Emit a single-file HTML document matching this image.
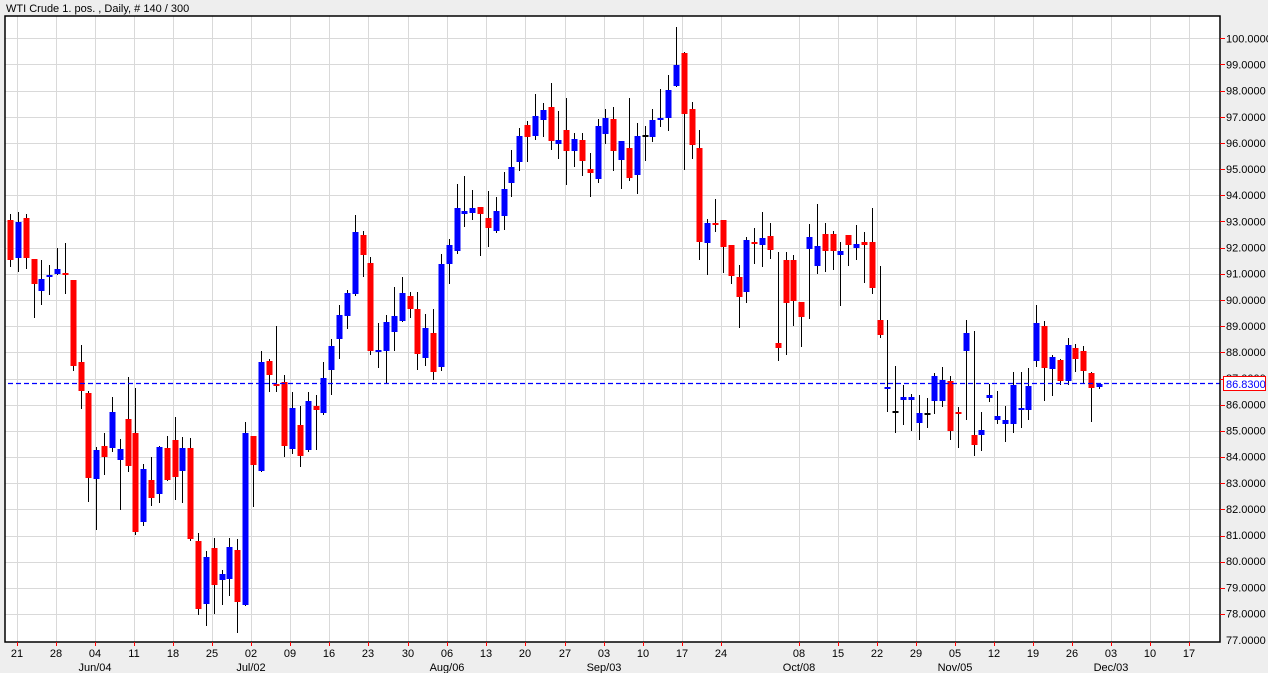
<!DOCTYPE html>
<html><head><meta charset="utf-8"><style>
html,body{margin:0;padding:0;background:#eeeeee;}
svg{display:block;font-family:"Liberation Sans",sans-serif;}
</style></head><body>
<svg id="s" width="1268" height="673" viewBox="0 0 1268 673" xmlns="http://www.w3.org/2000/svg">
<rect x="0" y="0" width="1268" height="673" fill="#eeeeee"/>
<rect x="5" y="16" width="1215" height="626" fill="#ffffff"/>
<g id="grid" stroke="#d9d9d9" stroke-width="1"></g>
<g id="candles"></g>
<line x1="8" y1="383.5" x2="1220" y2="383.5" stroke="#0000ff" stroke-width="1.2" stroke-dasharray="5,3"/>
<rect x="5" y="16" width="1215" height="626" fill="none" stroke="#000" stroke-width="1.5"/>
<g id="ticks" stroke="#ff0000" stroke-width="1"></g>
<text x="6" y="12" font-size="11" fill="#000">WTI Crude 1. pos. , Daily, # 140 / 300</text>
<g font-size="11" fill="#000">
<text x="1226" y="42.5">100.0000</text>
<text x="1226" y="68.5">99.0000</text>
<text x="1226" y="94.5">98.0000</text>
<text x="1226" y="121">97.0000</text>
<text x="1226" y="147">96.0000</text>
<text x="1226" y="173">95.0000</text>
<text x="1226" y="199">94.0000</text>
<text x="1226" y="225.5">93.0000</text>
<text x="1226" y="251.5">92.0000</text>
<text x="1226" y="277.5">91.0000</text>
<text x="1226" y="304">90.0000</text>
<text x="1226" y="330">89.0000</text>
<text x="1226" y="356">88.0000</text>
<text x="1226" y="382">87.0000</text>
<text x="1226" y="408.5">86.0000</text>
<text x="1226" y="434.5">85.0000</text>
<text x="1226" y="460.5">84.0000</text>
<text x="1226" y="487">83.0000</text>
<text x="1226" y="513">82.0000</text>
<text x="1226" y="539">81.0000</text>
<text x="1226" y="565">80.0000</text>
<text x="1226" y="591.5">79.0000</text>
<text x="1226" y="617.5">78.0000</text>
<text x="1226" y="644">77.0000</text>
</g>
<rect x="1223.5" y="376.5" width="42" height="14" fill="#ffffff" stroke="#ff0000" stroke-width="1"/>
<text x="1226" y="388" font-size="11" fill="#0000ff">86.8300</text>
<g font-size="11" fill="#000" text-anchor="middle">
<text x="17" y="657">21</text><text x="56" y="657">28</text><text x="95" y="657">04</text><text x="134" y="657">11</text>
<text x="173" y="657">18</text><text x="212" y="657">25</text><text x="251" y="657">02</text><text x="290" y="657">09</text>
<text x="329" y="657">16</text><text x="368" y="657">23</text><text x="408" y="657">30</text><text x="447" y="657">06</text>
<text x="486" y="657">13</text><text x="525" y="657">20</text><text x="565" y="657">27</text><text x="604" y="657">03</text>
<text x="643" y="657">10</text><text x="682" y="657">17</text><text x="721" y="657">24</text>
<text x="799" y="657">08</text><text x="838" y="657">15</text><text x="877" y="657">22</text><text x="916" y="657">29</text>
<text x="955" y="657">05</text><text x="994" y="657">12</text><text x="1033" y="657">19</text><text x="1072" y="657">26</text>
<text x="1111" y="657">03</text><text x="1150" y="657">10</text><text x="1189" y="657">17</text>
<text x="95" y="671">Jun/04</text><text x="251" y="671">Jul/02</text><text x="447" y="671">Aug/06</text>
<text x="604" y="671">Sep/03</text><text x="799" y="671">Oct/08</text><text x="955" y="671">Nov/05</text><text x="1111" y="671">Dec/03</text>
</g>
</svg>
<script>
(function(){
var NS="http://www.w3.org/2000/svg";
function el(p,t,a){var e=document.createElementNS(NS,t);for(var k in a)e.setAttribute(k,a[k]);p.appendChild(e);return e;}
var g=document.getElementById('grid'),tk=document.getElementById('ticks');
for(var k=0;k<=22;k++){var y=Math.round(38.3+k*26.17)+0.5;el(g,'line',{x1:5,y1:y,x2:1220,y2:y});el(tk,'line',{x1:1220,y1:y,x2:1225,y2:y});}
var wx=[17,56,95,134,173,212,251,290,329,368,408,447,486,525,565,604,643,682,721,799,838,877,916,955,994,1033,1072,1111,1150,1189];
wx.forEach(function(x){el(g,'line',{x1:x+0.5,y1:16,x2:x+0.5,y2:642});el(tk,'line',{x1:x+0.5,y1:642,x2:x+0.5,y2:646});});
var d=[
['r',220,260,214,267],['b',222,258,212,272],['r',218,258,214,269],['r',259,284,259,318],['b',279,291,260,305],['b',275,275,265,295],['b',269,274,248,275],['r',273,275,243,294],['r',280,366,280,371],['r',362,391,345,409],
['r',393,478,391,502],['b',450,479,447,530],['r',446,457,433,475],['b',412,448,397,452],['b',449,460,439,510],['r',419,466,377,472],['r',433,532,388,535],['b',469,522,464,526],['r',480,498,457,506],['b',447,494,446,503],
['r',448,480,436,481],['r',440,477,417,500],['b',448,471,437,503],['r',448,539,438,541],['r',541,609,533,615],['b',557,604,551,626],['r',548,585,538,614],['b',574,580,570,605],['b',547,579,538,596],['r',550,602,539,633],
['b',433,605,422,606],['r',436,465,436,507],['b',362,471,351,472],['r',361,375,359,392],['r',384,386,326,392],['r',382,446,375,457],['b',408,449,392,454],['r',425,456,406,467],['b',401,450,392,452],['r',406,410,395,450],
['b',378,413,362,415],['b',346,370,339,395],['b',315,339,305,359],['b',293,316,290,329],['b',232,294,215,296],['r',235,255,231,277],['r',263,351,257,355],['b',350,351,323,368],['b',322,351,315,383],['b',316,332,287,351],
['b',293,321,277,322],['r',296,309,292,318],['r',309,354,292,370],['b',328,358,314,366],['r',333,372,309,380],['b',264,367,254,371],['b',245,264,239,284],['b',208,251,184,254],['b',211,214,176,227],['b',208,213,190,220],
['r',207,214,207,256],['r',218,228,191,247],['b',211,231,197,233],['b',189,216,172,230],['b',167,183,150,197],['b',136,162,128,171],['r',125,137,121,162],['b',116,136,94,140],['b',110,120,103,137],['r',107,141,83,150],
['b',140,144,111,159],['r',130,151,98,185],['b',139,151,133,167],['r',140,161,133,176],['r',169,173,153,197],['b',126,179,119,183],['b',118,134,109,144],['r',119,151,107,171],['b',141,160,141,189],['r',148,178,98,181],
['b',136,175,123,194],['k',135,135,126,161],['b',120,137,109,142],['b',118,119,89,127],['b',90,118,75,131],['b',65,86,27,87],['r',53,114,52,170],['r',109,145,102,159],['r',148,242,130,260],['b',223,243,219,275],
['r',223,225,199,232],['r',220,247,220,273],['r',245,276,245,284],['r',277,297,265,328],['b',240,292,237,303],['r',242,243,228,264],['b',238,245,212,267],['r',236,250,223,259],['r',343,348,252,361],['r',260,303,252,355],
['r',260,301,255,326],['r',302,317,302,347],['b',237,249,224,319],['b',246,266,204,274],['r',234,251,223,272],['r',234,251,231,270],['b',251,255,242,306],['r',235,245,235,266],['b',244,248,225,260],['r',242,245,232,283],
['r',242,288,208,294],['r',320,335,266,338],['b',387,388,320,412],['k',411,411,366,433],['b',397,400,385,425],['b',397,400,394,431],['b',413,423,395,440],['k',413,413,398,428],['b',376,401,373,414],['b',380,401,367,407],
['r',381,431,376,440],['r',412,413,407,448],['b',333,351,320,420],['r',435,445,331,456],['b',430,435,412,451],['b',395,398,384,402],['b',416,420,391,424],['b',420,424,406,442],['b',385,424,372,433],['b',408,410,372,428],
['b',386,410,368,420],['b',323,361,305,367],['r',326,368,321,401],['b',357,369,355,396],['r',360,381,359,385],['b',345,381,338,385],['r',348,359,344,372],['r',351,371,346,383],['r',373,388,372,422],['b',384,387,384,389]
];
var c=document.getElementById('candles');
var col={r:'#ff0000',b:'#0000ff',k:'#000000'};
d.forEach(function(v,i){
 var x=Math.round(10+i*7.834);
 el(c,'rect',{x:x,y:v[3],width:1,height:Math.max(1,v[4]-v[3]),fill:'#000'});
 var h=Math.max(v[2]-v[1],2);
 el(c,'rect',{x:x-2.5,y:v[1],width:6,height:h,fill:col[v[0]]});
});
})();
</script>
</body></html>
